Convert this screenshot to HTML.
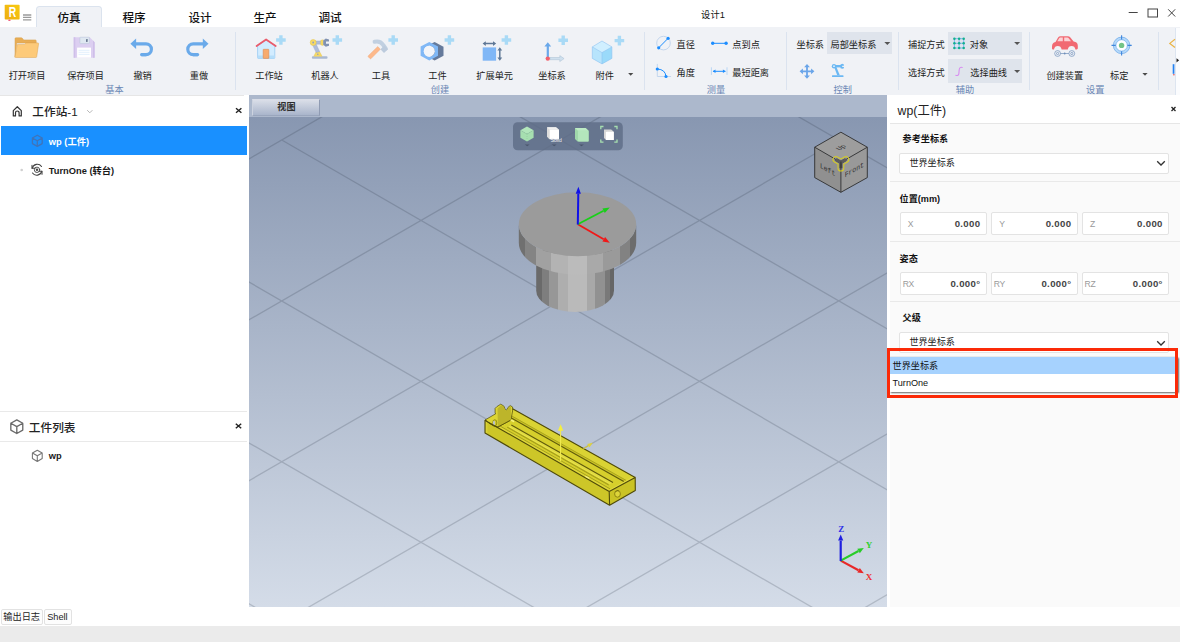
<!DOCTYPE html>
<html lang="zh-CN">
<head>
<meta charset="utf-8">
<title>设计1</title>
<style>
*{box-sizing:border-box;margin:0;padding:0}
html,body{width:1180px;height:642px;overflow:hidden;background:#fff}
body{position:relative;font-family:"Liberation Sans","Noto Sans CJK SC",sans-serif;color:#222;font-size:9.3px;line-height:1}
.abs{position:absolute}
.t{position:absolute;white-space:nowrap;transform:translate(-50%,calc(-50% + 1.8px))}
.tl{position:absolute;white-space:nowrap;transform:translate(0,calc(-50% + 1.8px))}
.tr{position:absolute;white-space:nowrap;transform:translate(-100%,calc(-50% + 1.8px))}
/* title bar */
#titlebar{left:0;top:0;width:1180px;height:27.500px;background:#fff;border-bottom:1.500px solid #dde5f0}
.tab{font-size:13px;font-weight:500;color:#111}
#tabactive{left:35.700px;top:5.500px;width:66.300px;height:22.500px;background:#f0f2f6;border:1.200px solid #dbe3ee;border-bottom:none;border-radius:3.500px 3.500px 0 0}
/* ribbon */
#ribbon{left:0;top:27px;width:1180px;height:68px;background:#f0f2f6}
.sep{position:absolute;top:32px;width:1.200px;height:58px;background:#dbe3ef}
.lbl{font-size:9.2px;color:#222}
.grp{font-size:9.2px;color:#6a86b4}
.combo{position:absolute;background:#dfe4ec}
.dd{position:absolute;width:0;height:0;border-left:2.5px solid transparent;border-right:2.5px solid transparent;border-top:3px solid #444}
/* left */
#left{left:0;top:95px;width:248px;height:512px;background:#fff}
/* viewport */
#vpstrip{left:249px;top:95px;width:638px;height:22px;background:#acb8cc}
#vp{left:249px;top:116.500px;width:638px;height:490.200px;background:linear-gradient(#8897b1,#d4dce8)}
/* right */
#right{left:887px;top:95px;width:293px;height:512px;background:#fff}
.box{position:absolute;background:#fff;border:1px solid #e3e3e3}
.hl{position:absolute;height:1px;background:#e9e9e9}
.bold{font-weight:700}
#status{left:0;top:626px;width:1180px;height:16px;background:#ebebeb}
.btn{position:absolute;top:609px;height:16px;border:1px solid #e2e2e2;border-radius:2px;background:#fdfdfd}
</style>
</head>
<body>
<!-- TITLEBAR -->
<div id="titlebar" class="abs"></div>
<div id="tabactive" class="abs"></div>

<svg class="abs" style="left:4px;top:4px" width="30" height="20" viewBox="0 0 30 20">
 <defs><linearGradient id="lg" x1="1" y1="0" x2="0" y2="1"><stop offset="0" stop-color="#f8cb10"/><stop offset="1" stop-color="#edac10"/></linearGradient></defs>
 <rect x=".7" y=".7" width="14.900" height="14.900" rx=".8" fill="url(#lg)"/>
 <ellipse cx="5.400" cy="16.200" rx="1.300" ry=".7" fill="#f0587a"/>
 <text transform="translate(8.600 13) scale(.74 1)" font-family="Liberation Sans,sans-serif" font-weight="700" font-size="14" fill="#fff" text-anchor="middle">R</text>
 <g stroke="#9a9a9a" stroke-width="1.300"><path d="M19 11h8.300M19 13.400h8.300M19 15.800h8.300"/></g>
</svg>
<div class="t tab" style="left:69px;top:16.1px;font-size:11.6px">仿真</div>
<div class="t tab" style="left:134px;top:16.1px;font-size:11.6px">程序</div>
<div class="t tab" style="left:200px;top:16.1px;font-size:11.6px">设计</div>
<div class="t tab" style="left:265px;top:16.1px;font-size:11.6px">生产</div>
<div class="t tab" style="left:330px;top:16.1px;font-size:11.6px">调试</div>
<div class="t" style="left:713px;top:14px;font-size:9.3px;color:#111">设计1</div>
<svg class="abs" style="left:1124px;top:4px" width="56" height="18" viewBox="0 0 56 18">
 <g stroke="#444" stroke-width="1" fill="none"><path d="M4.7 8.5h9"/><rect x="24" y="5" width="9.5" height="8"/><path d="M44.2 5.3l7 7.2M51.2 5.3l-7 7.2"/></g>
</svg>
<!-- RIBBON -->
<div id="ribbon" class="abs"></div>
<div class="abs" style="left:1175px;top:28px;width:5px;height:67px;background:#fbfcfe;border-left:1px solid #dde5f0"></div>
<div class="sep" style="left:234.800px"></div>
<div class="sep" style="left:643.600px"></div>
<div class="sep" style="left:785.900px"></div>
<div class="sep" style="left:897.800px"></div>
<div class="sep" style="left:1029px"></div>
<div class="sep" style="left:1157.800px"></div>
<div class="combo" style="left:826.5px;top:32px;width:65.5px;height:22px"></div>
<div class="combo" style="left:947.5px;top:31.7px;width:74px;height:23.5px"></div>
<div class="combo" style="left:947.5px;top:59.2px;width:74px;height:23.5px"></div>
<svg class="abs" style="left:0;top:0" width="1180" height="96" viewBox="0 0 1180 96">
<defs>
 <path id="plus" d="M-1.7-4.8h3.4v3.1h3.1v3.4h-3.1v3.1h-3.4v-3.1h-3.1v-3.4h3.1z" fill="#a9daf6"/>
 <path id="ddn" d="M-2.6-1.3h5.2l-2.6 2.8z" fill="#4a4a4a"/>
 <path id="ddw" d="M-3-1.4h6l-3 3z" fill="#555"/>
</defs>
<!-- folder -->
<path d="M15 38.6q0-.8.8-.8h5.6q.6 0 1 .5l1.3 1.6h11.6q.9 0 .9.9v2.2h-19.5l-1.7 14.3z" fill="#e8ad55" stroke="#d9a04c" stroke-width=".5"/>
<path d="M17 45.2q.1-.8.9-.8h6.6l1.5-1.5h11.9q.8 0 .7.8l-1.9 13q-.1.8-.9.8h-20q-.8 0-.7-.8z" fill="#fdca79" stroke="#dca552" stroke-width=".5"/>
<!-- floppy -->
<path d="M73.7 37.2h16.1l4.8 5.1v15.4h-20.9z" fill="#dccff1"/>
<path d="M73.7 37.2h1.6v20.5h-1.6zM93 40.6l1.6 1.7v15.4h-1.6z" fill="#cfbfe9"/>
<rect x="79.9" y="37.2" width="9.5" height="6.4" rx=".6" fill="#dfe8f1" stroke="#b7c4d8" stroke-width=".5"/>
<rect x="86.1" y="39.1" width="1.5" height="2.9" rx=".4" fill="#5d6c86"/>
<rect x="77.1" y="47.6" width="13.9" height="10.1" fill="#fff"/>
<path d="M78.6 50.3h10.9M78.6 52.3h10.9M78.6 54.4h10.9" stroke="#cfe6fa" stroke-width=".6"/>
<!-- undo / redo -->
<g fill="none" stroke="#6aaaea" stroke-width="3.2" stroke-linecap="round">
 <path d="M135.5 43.8H146a5.4 5.4 0 0 1 0 10.8h-4.6" stroke-linecap="butt"/>
 <path d="M146 54.6h-4.4"/>
 <path d="M203.300 43.8H193.200a5.400 5.400 0 0 0 0 10.800h4.600" stroke-linecap="butt"/>
 <path d="M193.200 54.600h4.400"/>
</g>
<path d="M130.400 43.700l5.700-5.300v10.600z" fill="#6aaaea"/>
<path d="M208.500 43.700l-5.700-5.300v10.600z" fill="#6aaaea"/>
<!-- house -->
<path d="M257.600 45.500l8.500-5.500 8.700 5.500v12.200q0 .8-.8.800h-15.600q-.8 0-.8-.8z" fill="#d2ecff" stroke="#8fc6f2" stroke-width=".7"/>
<path d="M257.700 55.600h17v2q0 .8-.8.800h-15.400q-.8 0-.8-.8z" fill="#b5defa"/>
<rect x="263.200" y="49.300" width="5.600" height="9.100" rx=".5" fill="#f7ab6e" stroke="#dd8a52" stroke-width=".6"/>
<path d="M256.600 46l9.500-6.500 9.600 6.500" fill="none" stroke="#e95b6b" stroke-width="1.800" stroke-linecap="round" stroke-linejoin="round"/>
<use href="#plus" x="280.900" y="40"/>
<!-- robot -->
<rect x="311.900" y="56.300" width="15.600" height="2.500" rx="1" fill="#a9b9d2"/>
<path d="M316.200 51.600h3.300l2.600 4.700h-8.300z" fill="#f6da66" stroke="#e2c24e" stroke-width=".4"/>
<path d="M312 43.800l3.400-1.300 4.200 9.100-3.400 1z" fill="#aebcdb" stroke="#95a6c8" stroke-width=".4"/>
<path d="M313 41h9v3.200h-9z" fill="#aebcdb" stroke="#95a6c8" stroke-width=".4"/>
<circle cx="313.200" cy="42.500" r="3" fill="#f6da66" stroke="#e2c24e" stroke-width=".5"/>
<circle cx="313.200" cy="42.500" r=".9" fill="#8fa0c0"/>
<circle cx="317.800" cy="54.200" r=".8" fill="#8fa0c0"/>
<path d="M320.800 40.300l2.400-.6v5.800l-2.400-.6z" fill="#f6da66" stroke="#e2c24e" stroke-width=".4"/>
<path d="M323.200 40.500l2.600-2 3.200 1v2h-3v2.200h3v2l-3.200 1-2.600-2z" fill="#8092b2"/>
<use href="#plus" x="337.300" y="40"/>
<!-- hammer -->
<path d="M368.300 55.800l9.400-9.300 2.700 2.700-9.300 9.400q-.6.500-1.100 0l-1.700-1.700q-.5-.5 0-1.100z" fill="#fdb98b" stroke="#eea777" stroke-width=".4"/>
<path d="M374.600 41.800q5.600-1.300 8.600 3.200l2.600 3.700" fill="none" stroke="#c1d0e1" stroke-width="4" stroke-linecap="round"/>
<path d="M384.400 45.500l3.600 3.700-4 3.800-3.600-3.700z" fill="#bccbdd"/>
<use href="#plus" x="393.200" y="40"/>
<!-- nut -->
<path d="M434.600 41.900l8.900 4.800v9l-8.900 4.800-4-2.200v-14.300z" fill="#657a9b"/>
<path d="M429.300 41.900l8.700 4.700v9.200l-8.700 4.700-8.700-4.700v-9.200zM429.300 45.700a5.500 5.500 0 1 0 .01 0z" fill="#80b8f6" fill-rule="evenodd"/>
<circle cx="429.300" cy="51.200" r="5.500" fill="#f3f5f9"/>
<use href="#plus" x="449.400" y="40"/>
<!-- expand unit -->
<rect x="482.700" y="47.400" width="13.400" height="13.300" fill="#80b7f6"/>
<g stroke="#5f7896" stroke-width="1.500" fill="#5f7896">
 <path d="M484.500 43.600h9.800M499.800 49.200v9.700" fill="none"/>
 <path d="M482.600 43.600l3.200-2.400v4.800zM496.200 43.600l-3.200-2.400v4.800zM499.800 47.300l2.400 3.200h-4.800zM499.800 60.800l2.400-3.200h-4.800z" stroke="none"/>
</g>
<use href="#plus" x="506.400" y="40"/>
<!-- coord -->
<path d="M550 57.500h9.800v-1.900l4.300 3-4.300 3v-1.900h-9.800z" fill="#cfe0ee" stroke="#a9bfd3" stroke-width=".5"/>
<path d="M546.700 57.500v-11h-2.300l3.400-4.300 3.400 4.300h-2.300v11z" fill="#6aa8ea"/>
<circle cx="547.800" cy="58.600" r="2.200" fill="#f2616c"/>
<use href="#plus" x="563.200" y="40.300"/>
<!-- cube -->
<path d="M602 41l9.900 5.900-9.900 5.700-9.700-5.700z" fill="#d0efff"/>
<path d="M592.300 46.900l9.700 5.700v11.300l-9.700-5.500z" fill="#b7e4fc"/>
<path d="M611.900 46.900l-9.900 5.700v11.300l9.900-5.500z" fill="#9adafa"/>
<path d="M602 41l9.900 5.900v11.500l-9.900 5.500-9.700-5.500v-11.500zM592.300 46.900l9.700 5.700 9.900-5.700M602 52.600v11.300" fill="none" stroke="#8dc2f2" stroke-width=".6" stroke-linejoin="round"/>
<use href="#plus" x="619.400" y="40.600"/>
<use href="#ddn" x="630.700" y="74.200"/>
<!-- diameter -->
<circle cx="663.500" cy="43.100" r="6.800" fill="none" stroke="#c3d6ee" stroke-width="1"/>
<path d="M658.700 47.800l9.400-9.500" stroke="#1c8dff" stroke-width="1"/>
<circle cx="658.700" cy="47.800" r="1.600" fill="#1c8dff"/><circle cx="668.100" cy="38.300" r="1.600" fill="#1c8dff"/>
<!-- angle -->
<path d="M657.300 63.900v12.600h13.800" fill="none" stroke="#c3d6ee" stroke-width="1"/>
<path d="M657.300 69q8 .4 8.700 7.500" fill="none" stroke="#1c8dff" stroke-width="1"/>
<circle cx="657.300" cy="69" r="1.600" fill="#1c8dff"/><circle cx="666" cy="76.500" r="1.600" fill="#1c8dff"/>
<!-- p2p -->
<path d="M712.700 43.300h13.400" stroke="#1c8dff" stroke-width="1"/>
<circle cx="712.700" cy="43.300" r="1.700" fill="#1c8dff"/><circle cx="726.100" cy="43.300" r="1.700" fill="#1c8dff"/>
<!-- shortest -->
<path d="M711.400 67.300v7.600M727 67.300v7.600" stroke="#b9d6f4" stroke-width="1"/>
<path d="M713 71.300h12.400" stroke="#1c8dff" stroke-width="1"/>
<path d="M712.700 71.300l2.800-1.700v3.400zM725.700 71.300l-2.800-1.700v3.400z" fill="#1c8dff"/>
<!-- combo arrows -->
<use href="#ddw" x="887.300" y="43.300"/>
<use href="#ddw" x="1017.100" y="43.500"/>
<use href="#ddw" x="1017.100" y="71.500"/>
<!-- move -->
<g fill="#6aa5e9"><path d="M806.100 65.800h1.800v11h-1.800zM801.500 70.400h11v1.800h-11z"/>
<path d="M807 63.900l2.900 3.300h-5.800zM807 78.700l2.900-3.300h-5.800zM799.600 71.300l3.300-2.900v5.800zM814.400 71.300l-3.300-2.900v5.800z"/></g>
<!-- small robot -->
<g fill="#6bb8f3"><rect x="832" y="75.200" width="11.500" height="1.800" rx=".6"/>
<path d="M834 66.500l2-.6 3.800 9.300h-2.600z"/><path d="M833 65h8v2.400h-8z"/><circle cx="834" cy="66.200" r="2.200"/>
<path d="M840.500 64.400l1.800-.6 1.600.6v1.400h-1.700v1.100h1.700v1.300l-1.600.6-1.800-.6z"/></g>
<circle cx="834" cy="66.200" r=".9" fill="#e6f3fd"/>
<!-- grid -->
<path d="M954.400 38.700h9.300v9.300h-9.300zM959.100 38.700v9.300M954.400 43.300h9.300" fill="none" stroke="#62a8f0" stroke-width=".8"/>
<g fill="#12b08e"><circle cx="954.400" cy="38.700" r="1.250"/><circle cx="959.100" cy="38.700" r="1.250"/><circle cx="963.700" cy="38.700" r="1.250"/><circle cx="954.400" cy="43.300" r="1.250"/><circle cx="959.100" cy="43.300" r="1.250"/><circle cx="963.700" cy="43.300" r="1.250"/><circle cx="954.400" cy="48" r="1.250"/><circle cx="959.100" cy="48" r="1.250"/><circle cx="963.700" cy="48" r="1.250"/></g>
<!-- S curve -->
<path d="M962.200 67.500q-2.600-.9-3 2.200-.2 2.200-.3 3.600-.4 2.900-3.100 2" fill="none" stroke="#d88cf0" stroke-width="1.100" stroke-linecap="round"/>
<!-- car -->
<path d="M1052 46.400q0-3.800 3.500-4.400l2.600-4.400q.8-1.400 2.400-1.400h7.200q1.700 0 2.700 1.300l3.200 4q4.200.6 4.200 4.200v2.600q0 1.100-1.100 1.100h-1.300q-.6-3.400-3.800-3.400t-3.800 3.400h-6.200q-.6-3.400-3.800-3.400t-3.800 3.400h-1q-1 0-1-1z" fill="#f16a73"/>
<path d="M1057.300 41.300l2-3.200q.3-.5.900-.5h2.600v3.700zM1064.200 37.600h3.300q.6 0 1 .5l2.500 3.200h-6.800z" fill="#fbd3d6"/>
<g fill="none" stroke="#6e8fba" stroke-width=".7"><circle cx="1057.600" cy="53.500" r="2.900"/><circle cx="1071.800" cy="53.500" r="2.900"/><circle cx="1057.600" cy="53.500" r="1.100"/><circle cx="1071.800" cy="53.500" r="1.100"/><path d="M1060.500 53.500h8.400"/></g>
<circle cx="1064.700" cy="53.500" r=".9" fill="#6e8fba"/>
<!-- target -->
<circle cx="1121.600" cy="45.400" r="7" fill="#fff" stroke="#b5d9fa" stroke-width="2.600"/>
<circle cx="1121.600" cy="45.400" r="8.300" fill="none" stroke="#5b9de6" stroke-width=".6"/>
<circle cx="1121.600" cy="45.400" r="5.700" fill="none" stroke="#5b9de6" stroke-width=".6"/>
<path d="M1121.600 35.300v4.200M1121.600 51.300v4.200M1111.500 45.400h4.200M1127.500 45.400h4.200" stroke="#3f86dc" stroke-width="1.100"/>
<circle cx="1121.600" cy="45.400" r="2.700" fill="#74c487"/>
<use href="#ddn" x="1145" y="74.300"/>
<!-- cut off next group -->
<path d="M1175 39.300l-5.200 4.100 5.200 4.100" fill="none" stroke="#e9b344" stroke-width="1.200"/>
<rect x="1172.700" y="64.200" width="1.700" height="9.600" fill="#2482f2"/><circle cx="1173.900" cy="74.700" r=".8" fill="#e5484a"/>
<path d="M1176.500 58.200l2.600 2.100-2.600 2.100z" fill="#222"/>
</svg>
<div class="t lbl" style="left:27px;top:75.3px">打开项目</div>
<div class="t lbl" style="left:85.500px;top:75.3px">保存项目</div>
<div class="t lbl" style="left:142.600px;top:75.3px">撤销</div>
<div class="t lbl" style="left:199px;top:75.3px">重做</div>
<div class="t grp" style="left:114.500px;top:89.3px">基本</div>
<div class="t lbl" style="left:269px;top:75.3px">工作站</div>
<div class="t lbl" style="left:325px;top:75.3px">机器人</div>
<div class="t lbl" style="left:381px;top:75.3px">工具</div>
<div class="t lbl" style="left:437.400px;top:75.3px">工件</div>
<div class="t lbl" style="left:494.700px;top:75.3px">扩展单元</div>
<div class="t lbl" style="left:552px;top:75.3px">坐标系</div>
<div class="t lbl" style="left:604.800px;top:75.3px">附件</div>
<div class="t grp" style="left:440px;top:89.3px">创建</div>
<div class="tl lbl" style="left:676.500px;top:44.3px">直径</div>
<div class="tl lbl" style="left:676.500px;top:72.2px">角度</div>
<div class="tl lbl" style="left:732.300px;top:44.3px">点到点</div>
<div class="tl lbl" style="left:732.300px;top:72.2px">最短距离</div>
<div class="t grp" style="left:716px;top:89.3px">测量</div>
<div class="tl lbl" style="left:796.500px;top:43.8px">坐标系</div>
<div class="tl lbl" style="left:830.500px;top:43.8px">局部坐标系</div>
<div class="t grp" style="left:842.800px;top:89.3px">控制</div>
<div class="tl lbl" style="left:908px;top:44.2px">捕捉方式</div>
<div class="tl lbl" style="left:908px;top:72px">选择方式</div>
<div class="tl lbl" style="left:969.800px;top:44px">对象</div>
<div class="tl lbl" style="left:970.300px;top:72px">选择曲线</div>
<div class="t grp" style="left:965px;top:89.3px">辅助</div>
<div class="t lbl" style="left:1064.800px;top:75.3px">创建装置</div>
<div class="t lbl" style="left:1119.200px;top:75.3px">标定</div>
<div class="t grp" style="left:1095.200px;top:89.3px">设置</div>
<!-- LEFT -->
<div id="left" class="abs"></div>
<div class="abs" style="left:1px;top:126px;width:245.800px;height:29.300px;background:#1990ff"></div>
<div class="hl" style="left:0;top:95px;width:244px;background:#e6e6e6"></div>
<div class="hl" style="left:0;top:411px;width:247px"></div>
<div class="hl" style="left:0;top:440.500px;width:247px"></div>
<svg class="abs" style="left:0;top:95px" width="248" height="400" viewBox="0 95 248 400">
<defs>
 <g id="cubeic" fill="none" stroke-linejoin="round" stroke-linecap="round"><path d="M0-5.600l4.900 2.800v5.600l-4.900 2.800-4.900-2.800v-5.600zM-4.900-2.800l4.900 2.800 4.900-2.800M0 0v5.600"/></g>
</defs>
<!-- home -->
<path d="M13.300 110.600l4-3.900 4 3.900v5.300h-2.200v-3.100a1.800 1.800 0 0 0-3.600 0v3.100h-2.200z" fill="none" stroke="#333" stroke-width="1.200" stroke-linejoin="round"/>
<path d="M87.200 110.200l2.600 2.600 2.600-2.600" fill="none" stroke="#b5b5b5" stroke-width="1"/>
<path d="M236 108.200l5.400 4.600M241.400 108.200l-5.400 4.600" stroke="#222" stroke-width="1.400"/>
<use href="#cubeic" x="37.300" y="140.800" stroke="#3f74ba" stroke-width="1.300"/>
<circle cx="21.700" cy="170" r="1.300" fill="#d0d0d0"/>
<!-- turntable icon -->
<g fill="none" stroke="#444" stroke-width="1.100" stroke-linecap="round">
 <path d="M32.200 168.300a5.200 5.200 0 0 1 9.300-1.800"/><path d="M41.800 171.200a5.200 5.200 0 0 1-9.300 1.800"/>
 <path d="M32 165.400v2.900h2.900M42 174.200v-2.900h-2.900" stroke-linejoin="round"/>
 <circle cx="37" cy="169.800" r="2.700" stroke-width=".9"/>
</g>
<circle cx="37" cy="169.800" r="1.200" fill="#444"/>
<!-- worklist -->
<use href="#cubeic" x="16.800" y="426.700" stroke="#6a6a6a" stroke-width="1.100" transform="translate(16.800 426.700) scale(1.220) translate(-16.800 -426.700)"/>
<path d="M235.800 423.700l5.400 4.600M241.200 423.700l-5.400 4.600" stroke="#222" stroke-width="1.400"/>
<use href="#cubeic" x="37.300" y="455.800" stroke="#777" stroke-width="1.100"/>
</svg>
<div class="tl" style="left:32.300px;top:110.300px;font-size:11.7px;font-weight:500;color:#222">工作站-1</div>
<div class="tl bold" style="left:48.800px;top:140.500px;font-size:9.3px;color:#fff">wp (工件)</div>
<div class="tl bold" style="left:48.800px;top:169.500px;font-size:9.3px;color:#1a1a1a">TurnOne (转台)</div>
<div class="tl" style="left:28.800px;top:426.200px;font-size:11.7px;font-weight:500;color:#222">工件列表</div>
<div class="tl bold" style="left:48.800px;top:455.000px;font-size:9.3px;color:#1a1a1a">wp</div>
<!-- VIEWPORT -->
<div id="vpstrip" class="abs"></div>
<div id="vp" class="abs"></div>
<div class="abs" style="left:252px;top:98.500px;width:68px;height:17.500px;background:linear-gradient(#dadee8,#a9b5cb);border:1px solid;border-color:#d9dde7 #8f9bb3 #9aa6bd #cdd3df"></div>
<div class="t bold" style="left:286.400px;top:106.300px;font-size:9.100px;color:#2e2e2e">视图</div>
<svg class="abs" style="left:249px;top:117px" width="638" height="490" viewBox="249 117 638 490">
<defs><linearGradient id="gdisc" gradientUnits="userSpaceOnUse" x1="518.8" y1="0" x2="636.2" y2="0"><stop offset="0.0007" stop-color="#707070"/><stop offset="0.0544" stop-color="#707070"/><stop offset="0.0544" stop-color="#848484"/><stop offset="0.1440" stop-color="#848484"/><stop offset="0.1440" stop-color="#a1a1a1"/><stop offset="0.2734" stop-color="#a1a1a1"/><stop offset="0.2734" stop-color="#b3b3b3"/><stop offset="0.4227" stop-color="#b3b3b3"/><stop offset="0.4227" stop-color="#bbbbbb"/><stop offset="0.5819" stop-color="#bbbbbb"/><stop offset="0.5819" stop-color="#a9a9a9"/><stop offset="0.7213" stop-color="#a9a9a9"/><stop offset="0.7213" stop-color="#9a9a9a"/><stop offset="0.8606" stop-color="#9a9a9a"/><stop offset="0.8606" stop-color="#828282"/><stop offset="0.9502" stop-color="#828282"/><stop offset="0.9502" stop-color="#6c6c6c"/><stop offset="1.0000" stop-color="#6c6c6c"/></linearGradient><linearGradient id="glow" gradientUnits="userSpaceOnUse" x1="536.2" y1="0" x2="614.0" y2="0"><stop offset="-0.0003" stop-color="#6a6a6a"/><stop offset="0.0688" stop-color="#6a6a6a"/><stop offset="0.0688" stop-color="#7e7e7e"/><stop offset="0.1589" stop-color="#7e7e7e"/><stop offset="0.1589" stop-color="#979797"/><stop offset="0.2790" stop-color="#979797"/><stop offset="0.2790" stop-color="#aeaeae"/><stop offset="0.4142" stop-color="#aeaeae"/><stop offset="0.4142" stop-color="#bababa"/><stop offset="0.6545" stop-color="#bababa"/><stop offset="0.6545" stop-color="#a8a8a8"/><stop offset="0.7596" stop-color="#a8a8a8"/><stop offset="0.7596" stop-color="#919191"/><stop offset="0.8798" stop-color="#919191"/><stop offset="0.8798" stop-color="#797979"/><stop offset="0.9549" stop-color="#797979"/><stop offset="0.9549" stop-color="#666666"/><stop offset="1.0000" stop-color="#666666"/></linearGradient></defs>
<path d="M244.0 600.9L893.0 975.8M244.0 440.0L893.0 814.9M244.0 279.1L893.0 654.0M244.0 161.8L893.0 -213.1M281.8 140.0L893.0 493.1M244.0 322.7L893.0 -52.2M244.0 -42.7L893.0 332.2M244.0 483.6L838.8 140.0M244.0 -203.6L893.0 171.3M244.0 644.5L893.0 269.6M244.0 805.4L893.0 430.5M244.0 966.3L893.0 591.4" fill="none" stroke="#2a3242" stroke-opacity=".2" stroke-width="1.300"/>
<g id="turntable"><path d="M536.2 250V290.7a38.9 21.2 0 0 0 77.8 0V250z" fill="url(#glow)"/><path d="M518.8 224.3v18.5a58.7 32 0 0 0 117.4 0v-18.5a58.7 32 0 0 1 -117.4 0z" fill="url(#gdisc)"/><ellipse cx="577.5" cy="224.3" rx="58.7" ry="32" fill="#9b9b9b"/><path d="M577.8 224.2L603.7 239.3" stroke="#f01818" stroke-width="1.8" fill="none"/><path d="M609.8 242.8L602.4 241.5L605.1 237.0z" fill="#f01818"/><path d="M577.8 224.2L603.6 210.7" stroke="#18d018" stroke-width="1.8" fill="none"/><path d="M609.8 207.5L604.8 213.0L602.4 208.4z" fill="#18d018"/><path d="M577.8 224.4L578.3 193.8" stroke="#1010e8" stroke-width="2" fill="none"/><path d="M578.4 186.8L580.9 193.8L575.7 193.8z" fill="#1010e8"/></g>
<g id="workpiece"><polygon points="487.4,421.7 609.2,491.4 635.2,477.4 511.5,408.2" fill="#d6cf2c"/><polygon points="504.8,412.0 627.9,481.3 635.2,477.4 511.5,408.2" fill="#dad333"/><polygon points="502.7,413.2 623.8,481.5 626.0,480.3 504.7,412.0" fill="#cbc427"/><path d="M504.7 412.0L626.0 480.3" stroke="#8f8a16" stroke-width="0.6" stroke-opacity="1" fill="none"/><path d="M502.7 413.2L623.8 481.5" stroke="#5f5a0c" stroke-width="1.1" stroke-opacity="1" fill="none"/><polygon points="508.6,426.4 610.1,484.1 613.0,482.6 511.3,424.9" fill="#e0da40"/><polygon points="507.1,427.2 608.6,485.0 610.1,484.1 508.6,426.4" fill="#c2bb22"/><path d="M511.3 424.9L613.0 482.6" stroke="#5f5a0c" stroke-width="1.1" stroke-opacity="1" fill="none"/><path d="M508.6 426.4L610.1 484.1" stroke="#f0eb58" stroke-width="0.8" stroke-opacity="1" fill="none"/><path d="M507.1 427.2L608.6 485.0" stroke="#8f8a16" stroke-width="0.7" stroke-opacity="1" fill="none"/><polygon points="489.8,423.1 607.4,490.4 610.1,488.9 492.4,421.7" fill="#ddd638"/><path d="M492.4 421.7L610.1 488.9" stroke="#8f8a16" stroke-width="0.7" stroke-opacity="1" fill="none"/><polygon points="485.0,420.0 485.0,433.0 609.6,505.3 609.2,491.4 487.4,421.7" fill="#cdc628"/><polygon points="485.0,420.0 485.0,433.0 487.4,434.3 487.4,421.7" fill="#d9d236"/><polygon points="609.2,491.4 609.6,505.3 635.3,490.4 635.2,477.4" fill="#cac325"/><polygon points="608.3,490.5 609.2,491.4 635.2,477.4 633.6,476.3" fill="#e2dc44"/><ellipse cx="617.500" cy="493.900" rx="2.900" ry="3.300" fill="#ddd53a" stroke="#8f8410" stroke-width="1"/><path d="M615.300 492.200a2.900 3.300 0 0 1 3.500-1.400" stroke="#6c660c" stroke-width=".8" fill="none"/><path d="M485.0,420.0L495.800 413.700 495.100 413.300V408.400L496.800 406.700 500.700 404.200 503.800 406 505.400 409.800 506.600 410.200 508 407.400 510.200 405.600 512.600 407V411L510.900 420 497.900 427 489.100 423.100 487.4,421.7z" fill="#dcd535" stroke="#4f4a08" stroke-width=".7" stroke-linejoin="round"/><path d="M497.500 408.400L501 405.300 503.600 406.700 505.200 410.300 506.900 410.700 508.300 408 510.900 406.300V420L497.900 427z" fill="#bdb52a"/><path d="M497.900 427L510.900 420" stroke="#4f4a08" stroke-width=".8"/><path d="M489.100 423.100Q493 426.300 498.200 427.300" stroke="#4f4a08" stroke-width=".8" fill="none"/><ellipse cx="494.800" cy="422.800" rx="2" ry="3.100" fill="#d2cb2c" stroke="#6c660c" stroke-width=".6"/><ellipse cx="494" cy="423" rx="1" ry="2.300" fill="#b9c3d3"/><path d="M511.300 420.300l2.200 1" stroke="#f6f27a" stroke-width="1.600" stroke-linecap="round"/><path d="M487.4,421.7L609.2,491.4M609.2,491.4L609.6,505.3L635.3,490.4L635.2,477.4L609.2,491.4M485.0,420.0L485.0,433.0L609.6,505.3M512.600 408.800L635.2,477.4M485.0,420.0L487.4,421.7" fill="none" stroke="#4f4a08" stroke-width="1.1" stroke-linejoin="round"/><path d="M560.600 430V461" stroke="#f1ea52" stroke-width="1.100"/><path d="M560.600 424.200l2.700 6.600h-5.400z" fill="#f4ee40"/><path d="M583.400 448.800l5.500-3.400" stroke="#d6c93a" stroke-width="1.100"/><path d="M592.800 442.800l-5.600 1.200 2.400 3.200z" fill="#e0d23c"/><path d="M585.800 476.400l3.200 1.800" stroke="#f4f08a" stroke-width="1.200" stroke-linecap="round"/></g>
<g id="navcube"><polygon points="840.9,132.2 867.3,147.2 840.9,162.4 814.7,147.2" fill="#9d9d9d"/><polygon points="814.7,147.2 840.9,162.4 840.9,192.3 814.7,177.6" fill="#909090"/><polygon points="867.3,147.2 840.9,162.4 840.9,192.3 867.3,177.6" fill="#999999"/><path d="M840.9,132.2L867.3,147.2L867.3,177.6L840.9,192.3L814.7,177.6L814.7,147.2zM814.7,147.2L840.9,162.4L867.3,147.2M840.9,162.4L840.9,192.3" fill="none" stroke="#2e2e2e" stroke-width=".9" stroke-linejoin="round"/><mask id="trm" maskUnits="userSpaceOnUse" x="825" y="150" width="32" height="28"><path d="M840.900 162.400l-5-2.900M840.900 162.400l5-2.900M840.900 162.400v5.800" stroke="#fff" stroke-width="6.800" stroke-linecap="round" stroke-linejoin="round" fill="none"/><path d="M840.900 162.400l-5-2.900M840.900 162.400l5-2.900M840.900 162.400v5.800" stroke="#000" stroke-width="4.800" stroke-linecap="round" stroke-linejoin="round" fill="none"/></mask><rect x="825" y="150" width="32" height="28" fill="#d6cc22" mask="url(#trm)"/><path d="M840.900 162.400l-5-2.900M840.900 162.400l5-2.900M840.900 162.400v5.800" stroke="#4a4a4a" stroke-width="3" stroke-linecap="butt" fill="none"/><path d="M840.900 162.400l-5-2.900M840.900 162.400l5-2.900" stroke="#5c5c5c" stroke-width="3" fill="none"/><path d="M840.900 161.500v6.700" stroke="#3c3c3c" stroke-width="1.200" fill="none"/><text transform="matrix(.87 -.5 .87 .5 840.900 147.300)" font-family="Liberation Mono,monospace" font-size="7" fill="#303030" text-anchor="middle" y="2.300">Up</text><text transform="matrix(.87 .5 0 1 827.600 169.600)" font-family="Liberation Mono,monospace" font-size="7.400" fill="#303030" text-anchor="middle" y="2.400">Left</text><text transform="matrix(.87 -.5 0 1 854.300 169.600)" font-family="Liberation Mono,monospace" font-size="7.400" fill="#303030" text-anchor="middle" y="2.400">Front</text></g>
<g id="viewbar"><rect x="513" y="122.300" width="109.800" height="28" rx="4.500" fill="#5e6d86" fill-opacity=".82"/><polygon points="527.0,126.4 533.6,130.2 527.0,134.0 520.4,130.2" fill="#b2e6bb"/><polygon points="520.4,130.2 527.0,134.0 527.0,141.6 520.4,137.8" fill="#a6dfb0"/><polygon points="533.6,130.2 527.0,134.0 527.0,141.6 533.6,137.8" fill="#a6dfb0"/><path d="M527 134v6.500M527 134l-5-2.800M527 134l5-2.800" stroke="#8fcb9b" stroke-width=".6" stroke-dasharray="1 1" fill="none"/><path d="M547 127.200h9l3 2.600v9.400h-9.600l-2.400-2.400z" fill="#dcdcdc"/><rect x="549.700" y="129.700" width="9.300" height="9.500" rx=".8" fill="#ffffff"/><path d="M547 127.200h9l3 2.600h-9.300z" fill="#f1f1f1"/><text x="556.200" y="141.600" font-family="Liberation Sans,sans-serif" font-size="5" fill="#eef1f6" text-anchor="middle">Solid</text><path d="M575 128h10.600l3 2.800v10.700h-11l-2.600-2.600z" fill="#9fd8aa"/><rect x="578" y="130.700" width="10.600" height="10.800" rx=".8" fill="#b3e6bc"/><path d="M575 128h10.600l3 2.800h-10.600z" fill="#bdebc5"/><g transform="translate(1.700 1.100)"><path d="M602.300 128.300h7.200l2.600 2.400v8.300h-7.800l-2-2z" fill="#d6d6d6"/><rect x="604.200" y="130.600" width="7.900" height="8.400" rx=".7" fill="#ffffff"/></g><path d="M600.800 129.200v-2.700h2.700M614.300 126.500h2.700v2.700M617 139.500v2.700h-2.700M603.500 142.200h-2.700v-2.700" fill="none" stroke="#a6dfb0" stroke-width="1.300"/><path d="M524.8000000000001 144.400h4.800l-2.400 1.900z" fill="#4a566c"/><path d="M551.8000000000001 144.400h4.800l-2.400 1.900z" fill="#4a566c"/><path d="M579.1 144.400h4.800l-2.400 1.900z" fill="#4a566c"/></g>
<g id="triad"><path d="M840.7 560.6L858.5 570.3" stroke="#e82828" stroke-width="2.2" fill="none"/><path d="M863.8 573.2L857.3 572.6L859.8 568.0z" fill="#e82828"/><path d="M840.7 560.6L858.5 551.0" stroke="#28cc28" stroke-width="2.2" fill="none"/><path d="M863.8 548.1L859.8 553.2L857.3 548.7z" fill="#28cc28"/><path d="M840.7 561.0L840.7 540.6" stroke="#2020e0" stroke-width="2.2" fill="none"/><path d="M840.7 534.6L843.3 540.6L838.1 540.6z" fill="#2020e0"/><text x="841.3" y="531.6" font-family="Liberation Serif,serif" font-weight="700" font-size="9" fill="#3030e8" text-anchor="middle">Z</text><text x="869" y="547.7" font-family="Liberation Serif,serif" font-weight="700" font-size="9" fill="#30d030" text-anchor="middle">Y</text><text x="869" y="579.6" font-family="Liberation Serif,serif" font-weight="700" font-size="9" fill="#ee3030" text-anchor="middle">X</text></g>
</svg>
<!-- RIGHT -->
<div id="right" class="abs"></div>
<div class="abs" style="left:889.600px;top:122.500px;width:290.400px;height:484.500px;background:#fafafa;border-top:1px solid #e6e6e6"></div>
<div class="tl" style="left:897.600px;top:109.300px;font-size:12.300px;color:#222">wp(工件)</div>
<svg class="abs" style="left:1168px;top:103px" width="12" height="12" viewBox="0 0 12 12"><path d="M3.500 4l4 4M7.500 4l-4 4" stroke="#222" stroke-width="1.300"/></svg>
<div class="tl bold" style="left:902.600px;top:138.200px;font-size:9.100px;color:#111">参考坐标系</div>
<div class="box" style="left:899.400px;top:152.600px;width:270px;height:21px;border-radius:2px"></div>
<div class="tl" style="left:909.400px;top:161.600px;font-size:9.100px;color:#222">世界坐标系</div>
<svg class="abs" style="left:1154px;top:157px" width="14" height="12" viewBox="0 0 14 12"><path d="M3.200 4.300l3.800 3.700 3.800-3.700" fill="none" stroke="#333" stroke-width="1.300"/></svg>
<div class="hl" style="left:890px;top:180.500px;width:290px"></div>
<div class="tl bold" style="left:899.600px;top:197.600px;font-size:9.100px;color:#111">位置(mm)</div>
<div class="box" style="left:899.700px;top:211.700px;width:87.500px;height:23px;border-radius:2px"></div>
<div class="box" style="left:991.400px;top:211.700px;width:86.500px;height:23px;border-radius:2px"></div>
<div class="box" style="left:1082px;top:211.700px;width:87.400px;height:23px;border-radius:2px"></div>
<div class="tl" style="left:907.800px;top:222.200px;font-size:8.600px;color:#9a9a9a">X</div>
<div class="tl" style="left:999.300px;top:222.200px;font-size:8.600px;color:#9a9a9a">Y</div>
<div class="tl" style="left:1090px;top:222.200px;font-size:8.600px;color:#9a9a9a">Z</div>
<div class="tr bold" style="left:980.400px;top:222.200px;font-size:9.600px;letter-spacing:.350px;color:#444">0.000</div>
<div class="tr bold" style="left:1071.400px;top:222.200px;font-size:9.600px;letter-spacing:.350px;color:#444">0.000</div>
<div class="tr bold" style="left:1162.800px;top:222.200px;font-size:9.600px;letter-spacing:.350px;color:#444">0.000</div>
<div class="hl" style="left:890px;top:240.700px;width:290px"></div>
<div class="tl bold" style="left:899.600px;top:258px;font-size:9.100px;color:#111">姿态</div>
<div class="box" style="left:899.700px;top:272px;width:87.500px;height:22.600px;border-radius:2px"></div>
<div class="box" style="left:991.400px;top:272px;width:86.500px;height:22.600px;border-radius:2px"></div>
<div class="box" style="left:1082px;top:272px;width:87.400px;height:22.600px;border-radius:2px"></div>
<div class="tl" style="left:902.700px;top:282.200px;font-size:8.600px;color:#9a9a9a;letter-spacing:-.3px">RX</div>
<div class="tl" style="left:993.800px;top:282.200px;font-size:8.600px;color:#9a9a9a;letter-spacing:-.3px">RY</div>
<div class="tl" style="left:1084.500px;top:282.200px;font-size:8.600px;color:#9a9a9a;letter-spacing:-.3px">RZ</div>
<div class="tr bold" style="left:980.400px;top:282.200px;font-size:9.600px;letter-spacing:.350px;color:#444">0.000°</div>
<div class="tr bold" style="left:1071.400px;top:282.200px;font-size:9.600px;letter-spacing:.350px;color:#444">0.000°</div>
<div class="tr bold" style="left:1162.800px;top:282.200px;font-size:9.600px;letter-spacing:.350px;color:#444">0.000°</div>
<div class="hl" style="left:890px;top:301.400px;width:290px"></div>
<div class="tl bold" style="left:902.600px;top:317.300px;font-size:9.100px;color:#111">父级</div>
<div class="box" style="left:899.400px;top:331.900px;width:270px;height:21.200px;border-radius:2px"></div>
<div class="tl" style="left:909.400px;top:340.700px;font-size:9.100px;color:#222">世界坐标系</div>
<svg class="abs" style="left:1154px;top:336.500px" width="14" height="12" viewBox="0 0 14 12"><path d="M3.200 4.300l3.800 3.700 3.800-3.700" fill="none" stroke="#333" stroke-width="1.300"/></svg>
<!-- dropdown -->
<div class="abs" style="left:890px;top:356.500px;width:287.500px;height:35px;background:#fff;box-shadow:1px 1px 1.500px rgba(0,0,0,.55),0 0 1px rgba(0,0,0,.3)"></div>
<div class="abs" style="left:890px;top:356.500px;width:287.500px;height:17px;background:#a6d2fe"></div>
<div class="tl" style="left:892.600px;top:365px;font-size:9.100px;color:#111">世界坐标系</div>
<div class="tl" style="left:892.600px;top:382px;font-size:9.100px;color:#111">TurnOne</div>
<div class="abs" style="left:887px;top:347.800px;width:290.600px;height:50.600px;border:3.200px solid #fb2a08"></div>
<!-- BOTTOM -->
<div id="status" class="abs"></div>
<div class="btn" style="left:.5px;width:42px"></div>
<div class="btn" style="left:44.300px;width:28px"></div>
<div class="tl" style="left:3.300px;top:616.3px;font-size:9.2px;color:#222">输出日志</div>
<div class="tl" style="left:47.200px;top:616.3px;font-size:9.2px;color:#222">Shell</div>
</body>
</html>
